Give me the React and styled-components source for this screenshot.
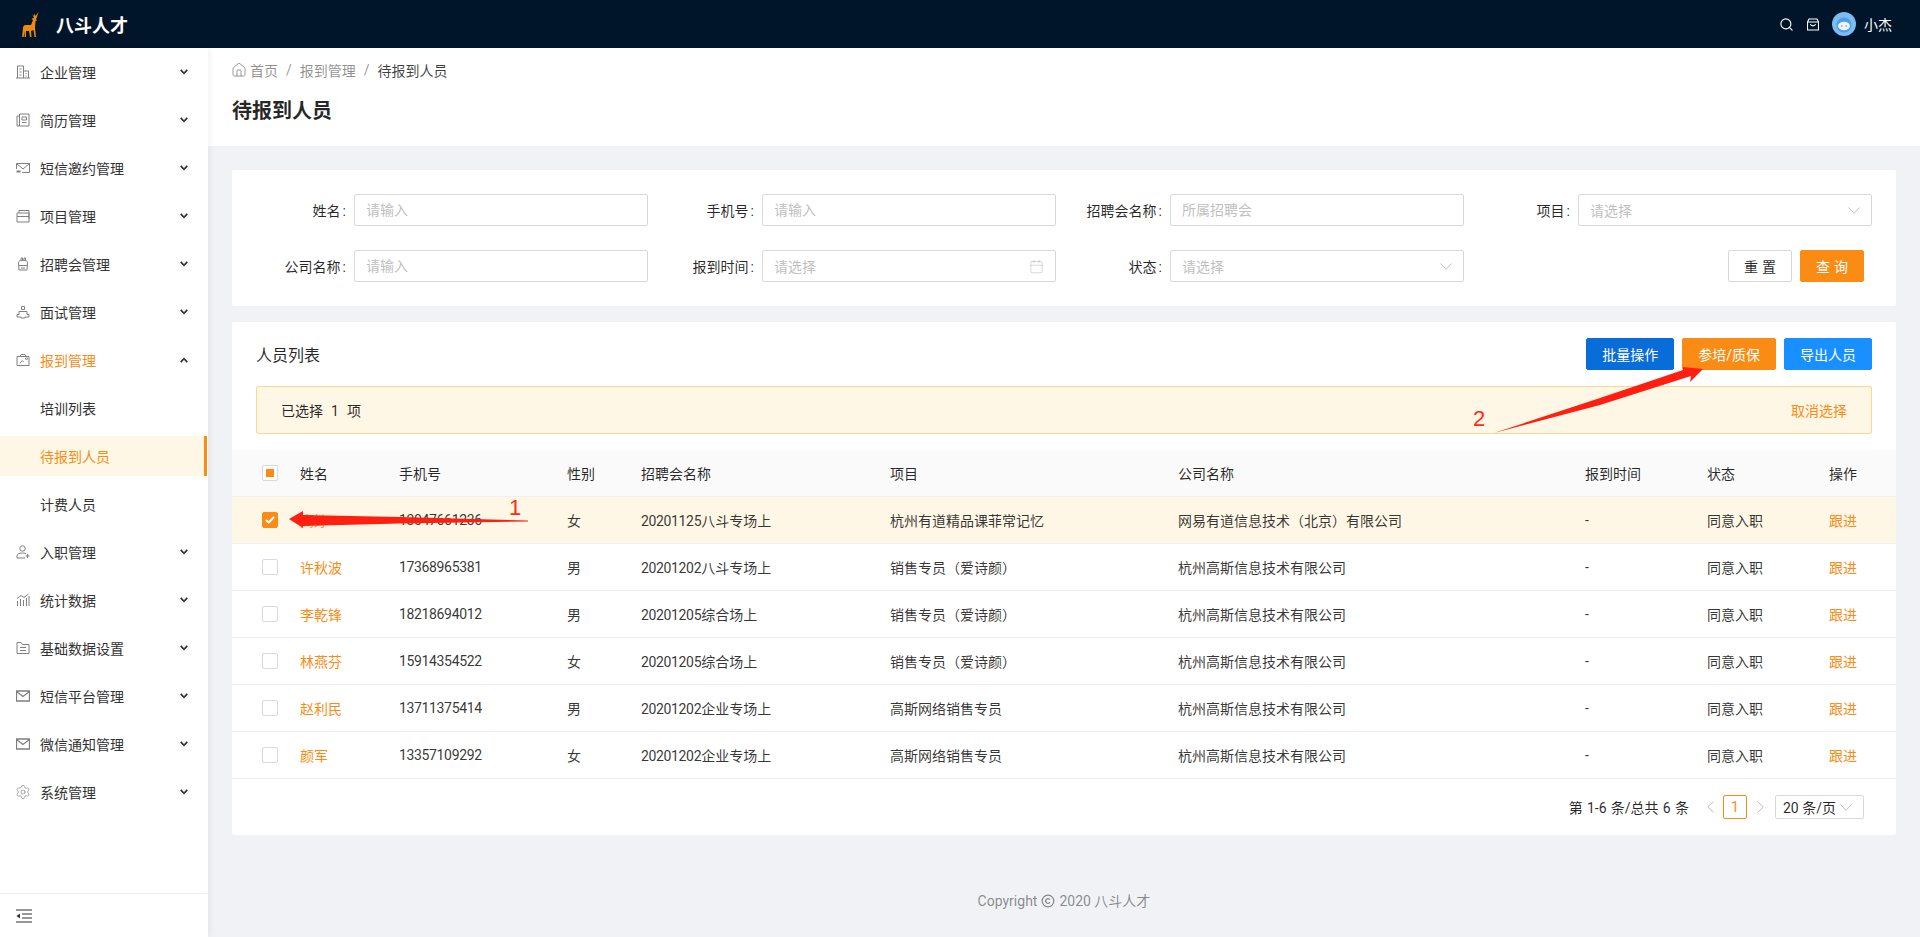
import React from 'react';
import styled, { createGlobalStyle } from 'styled-components';
import { Search, Home, Calendar, Copyright, Settings } from 'lucide-react';

const ORANGE = '#fa8c16';

const GlobalStyle = createGlobalStyle`
  html, body { margin: 0; padding: 0; height: 100%; }
  body {
    font-family: Roboto, "Noto Sans CJK SC", sans-serif;
    font-size: 14px;
    color: rgba(0, 0, 0, 0.85);
    background: #f0f2f5;
    overflow: hidden;
  }
  * { box-sizing: border-box; }
`;

const Page = styled.div`
  position: relative;
  display: flex;
  flex-direction: column;
  height: 100vh;
`;

const TopBar = styled.header`
  display: flex;
  align-items: center;
  flex: 0 0 48px;
  padding: 0 28px 0 21px;
  background: #001529;
  color: #fff;
`;

const Brand = styled.div`
  display: flex;
  align-items: center;
  gap: 17px;
  font-size: 18px;
  font-weight: 700;
  flex: 1;
`;

const TopIcon = styled.span`
  display: inline-flex;
  margin-right: 13px;
  color: #fff;
`;

const UserName = styled.span`
  margin-left: 8px;
`;

const Body = styled.div`
  display: flex;
  flex: 1;
  min-height: 0;
`;

const Sidebar = styled.aside`
  display: flex;
  flex-direction: column;
  flex: 0 0 208px;
  background: #fff;
  box-shadow: 2px 0 6px rgba(29, 35, 41, 0.05);
  z-index: 1;
`;

const Menu = styled.nav`
  display: flex;
  flex-direction: column;
  flex: 1;
`;

const MenuItem = styled.div`
  display: flex;
  align-items: center;
  flex: 0 0 40px;
  margin: 4px ${p => (p.$active ? '1px' : '0')} 4px 0;
  padding-left: ${p => (p.$sub ? 40 : 16)}px;
  padding-right: 20px;
  color: ${p => (p.$on ? ORANGE : '#333')};
  background: ${p => (p.$active ? '#fff7e6' : 'transparent')};
  border-right: ${p => (p.$active ? `3px solid ${ORANGE}` : '0')};
`;

const ItemIcon = styled.svg`
  flex: 0 0 14px;
  width: 14px;
  height: 14px;
  margin-right: 10px;
  fill: none;
  stroke: #808080;
  stroke-width: 1;
`;

const GearIcon = styled(Settings)`
  flex: 0 0 16px;
  margin: 0 9px 0 -1px;
  color: #808080;
`;

const ItemLabel = styled.span`
  flex: 1;
`;

const Chevron = styled.svg`
  width: 8px;
  height: 6px;
  fill: none;
  stroke: #333;
  stroke-width: 1.8;
  transform: ${p => (p.$up ? 'rotate(180deg)' : 'none')};
`;

const CollapseBar = styled.div`
  display: flex;
  align-items: center;
  flex: 0 0 44px;
  padding-left: 16px;
  border-top: 1px solid #f0f0f0;
  margin-right: 1px;
`;

const Main = styled.main`
  display: flex;
  flex-direction: column;
  flex: 1;
  min-width: 0;
`;

const PageHead = styled.div`
  height: 98px;
  padding: 11px 24px 0;
  background: #fff;
`;

const Crumbs = styled.div`
  display: flex;
  align-items: center;
  height: 22px;
  color: rgba(0, 0, 0, 0.45);
`;

const CrumbHome = styled.span`
  display: inline-flex;
  margin: 0 3px 0 -1px;
  color: #777;
`;

const CrumbSep = styled.span`
  margin: 0 8px;
`;

const CrumbNow = styled.span`
  color: rgba(0, 0, 0, 0.75);
`;

const PageTitle = styled.h1`
  margin: 14px 0 0;
  font-size: 20px;
  line-height: 32px;
  font-weight: 600;
`;

const Content = styled.div`
  padding: 24px 24px 0;
`;

const Card = styled.section`
  background: #fff;
  border-radius: 2px;
`;

const FilterCard = styled(Card)`
  display: grid;
  grid-template-columns: repeat(4, 408px);
  row-gap: 24px;
  padding: 24px 24px 24px 8px;
`;

const Field = styled.div`
  display: grid;
  grid-template-columns: 114px 294px;
  align-items: center;
`;

const FieldLabel = styled.label`
  text-align: right;
  color: rgba(0, 0, 0, 0.85);
`;

const Colon = styled.span`
  margin: 0 8px 0 2px;
`;

const TextInput = styled.input`
  height: 32px;
  padding: 0 11px;
  border: 1px solid #d9d9d9;
  border-radius: 2px;
  font: inherit;
  outline: none;
  &::placeholder { color: #bfbfbf; opacity: 1; }
`;

const PickBox = styled.div`
  display: flex;
  align-items: center;
  justify-content: space-between;
  height: 32px;
  padding: 0 11px;
  border: 1px solid #d9d9d9;
  border-radius: 2px;
  color: #bfbfbf;
`;

const ThinArrow = styled.svg`
  width: ${p => (p.$side ? 7 : 12)}px;
  height: ${p => (p.$side ? 12 : 7)}px;
  fill: none;
  stroke: #bfbfbf;
  stroke-width: 1;
`;

const FilterActions = styled.div`
  display: flex;
  justify-content: flex-end;
  gap: 8px;
  padding-right: 8px;
`;

const Button = styled.button`
  height: 32px;
  padding: 0 15px;
  border: 1px solid ${p => p.$bg || '#d9d9d9'};
  border-radius: 2px;
  background: ${p => p.$bg || '#fff'};
  color: ${p => (p.$bg ? '#fff' : 'rgba(0, 0, 0, 0.85)')};
  font: inherit;
  white-space: nowrap;
`;

const SpacedButton = styled(Button)`
  width: 64px;
  padding: 0;
  letter-spacing: 4px;
  text-indent: 4px;
`;

const ListCard = styled(Card)`
  margin-top: 16px;
`;

const ListBar = styled.div`
  display: flex;
  align-items: center;
  justify-content: space-between;
  padding: 16px 24px;
`;

const ListTitle = styled.div`
  font-size: 16px;
`;

const ListActions = styled.div`
  display: flex;
  gap: 8px;
`;

const Alert = styled.div`
  display: flex;
  align-items: center;
  justify-content: space-between;
  height: 48px;
  margin: 0 24px 16px;
  padding: 0 24px;
  border: 1px solid #ffd591;
  border-radius: 2px;
  background: #fff7e6;
`;

const Count = styled.span`
  margin: 0 8px;
`;

const Link = styled.span`
  color: ${ORANGE};
`;

const Table = styled.table`
  width: 100%;
  table-layout: fixed;
  border-collapse: separate;
  border-spacing: 0;
`;

const Col = styled.col`
  width: ${p => p.$w}px;
`;

const Th = styled.th`
  height: 47px;
  padding: 0 16px;
  background: #fafafa;
  border-bottom: 1px solid #f0f0f0;
  text-align: left;
  font-weight: 400;
`;

const Td = styled.td`
  height: 47px;
  padding: 0 16px;
  border-bottom: 1px solid #f0f0f0;
  background: ${p => (p.$on ? '#fff7e6' : '#fff')};
  color: rgba(0, 0, 0, 0.8);
  white-space: nowrap;
`;

const CheckCell = styled.div`
  padding-left: 14px;
`;

const Check = styled.span`
  display: flex;
  align-items: center;
  justify-content: center;
  width: 16px;
  height: 16px;
  border: 1px solid ${p => (p.$on ? ORANGE : '#d9d9d9')};
  border-radius: 2px;
  background: ${p => (p.$on ? ORANGE : '#fff')};
`;

const CheckDot = styled.span`
  width: 8px;
  height: 8px;
  background: ${ORANGE};
`;

const Digits = styled.span`
  letter-spacing: -0.35px;
`;

const Pager = styled.div`
  display: flex;
  align-items: center;
  justify-content: flex-end;
  gap: 1px;
  height: 56px;
  padding: 0 32px;
`;

const PagerTotal = styled.span`
  margin-right: 8px;
  word-spacing: 0.8px;
`;

const PagerStep = styled.span`
  display: flex;
  align-items: center;
  justify-content: center;
  width: 24px;
`;

const PagerNow = styled.span`
  display: flex;
  align-items: center;
  justify-content: center;
  width: 24px;
  height: 24px;
  border: 1px solid ${ORANGE};
  border-radius: 2px;
  color: ${ORANGE};
`;

const PagerSize = styled.div`
  display: flex;
  align-items: center;
  justify-content: space-between;
  width: 89px;
  height: 24px;
  margin-left: 2px;
  padding: 0 11px 0 7px;
  border: 1px solid #d9d9d9;
  border-radius: 2px;
`;

const Footer = styled.footer`
  display: flex;
  align-items: center;
  justify-content: center;
  gap: 4px;
  margin-top: auto;
  padding-bottom: 25px;
  line-height: 22px;
  color: rgba(0, 0, 0, 0.45);
`;

const Annotations = styled.svg`
  position: absolute;
  left: 0;
  top: 0;
  width: 1920px;
  height: 937px;
  pointer-events: none;
  z-index: 2;
`;

const Mark = styled.span`
  position: absolute;
  left: ${p => p.$x}px;
  top: ${p => p.$y}px;
  font-family: "Liberation Sans", sans-serif;
  font-size: 22px;
  line-height: 24px;
  color: #ff2a1a;
  z-index: 3;
`;

const Deer = () => (
  <svg width="18" height="25" viewBox="0 0 18 25">
    <path fill="#ee8a0c" d="M1 25 L2 16 Q2 13 5 13 L10 13 L12 8 L10.5 7 L13 5.5 L11 2 L13 4 L13.5 1.5 L14.5 4 L17.5 0 L16 5 L15 7 L16 8.5 L14.5 9 L14 16 L15 25 L13.5 25 L12.5 18 L10 19 L10.5 25 L9 25 L8 19 L5 19 L5 25 L3.5 25 L4 19 L2.5 25 Z" />
  </svg>
);

const Avatar = () => (
  <svg width="24" height="24" viewBox="0 0 24 24">
    <circle cx="12" cy="12" r="12" fill="#7cbcf3" />
    <circle cx="12" cy="13" r="7.5" fill="#4b9fec" />
    <ellipse cx="12" cy="14" rx="6" ry="4.2" fill="#eef5fd" />
    <circle cx="9.8" cy="14" r="0.8" fill="#5a8fc4" />
    <circle cx="14.2" cy="14" r="0.8" fill="#5a8fc4" />
  </svg>
);

const BagIcon = () => (
  <svg width="12" height="13" viewBox="0 0 12 13" fill="none" stroke="#fff" strokeWidth="1.1">
    <path d="M2 1h8l1.500 3v8h-11V4z" />
    <path d="M0.500 4h11M3.500 6c.5 2.500 4.500 2.500 5 0" />
  </svg>
);

const icons = {
  building: <><path d="M1.500 13V1h6v12M7.500 6h5v7M0 13h14M3.500 4h2M3.500 7h2M3.500 10h2M9.500 8.500h1M9.500 11h1" /></>,
  resume: <><path d="M3.500 1h9.500v12H3.500zM3.500 3H1v10h2.500M6 4h4.500v3H6zM6 9.500h4.500" /></>,
  invite: <><path d="M.5 2.500h13v9H6M.5 2.500L7 8l6.500-5.500M.5 2.500V8" /><path d="M.5 10.500h4" strokeWidth="2" /></>,
  project: <><path d="M1 4h12v9H1zM1 7.500h12M3 4V1.500h10V10" /></>,
  fair: <><path d="M3 13l-.5-7c0-2 1-2.500 4.500-2.500s4.500 .5 4.500 2.500L11 13zM3 8.500h8M5 3.500V1h1.500v2.500M8 3.500V1h1.500v2.500M5 11h4" /></>,
  interview: <><path d="M5.500 1.500h3v3h-3zM3 6.500h8v3h2v2.500h-4v1H5v-1H1V9.500h2z" /></>,
  report: <><path d="M1 3.500h12v9H1zM4 3.500L5 1.500h4l1 2M4 10.500c1-3 3-3 4-1.500M10.500 6.500a1 1 0 1 0-.01 0" /></>,
  onboard: <><circle cx="6.500" cy="3.500" r="2.700" /><path d="M1 13v-2c0-2 2-3 5.500-3 1.500 0 2.500.2 3.500.6M1 13h8M11.500 9v4M9.500 11h4" /></>,
  stats: <><path d="M1.500 13V8M4.500 13V6M7.500 13V7M10.500 13V5M13 13V3M1 5.500L5 2.500l3 2L12.500 1" /></>,
  base: <><path d="M1 3V12.500h12V3.500H6.500L5 1.500H1zM4 6.500h6M4 9.500h6" /></>,
  mail: <><path d="M.5 2h13v10H.5zM.5 2.500L7 7.500l6.500-5" strokeWidth="1.3" /></>,
};

const menu = [
  { icon: 'building', label: '企业管理' },
  { icon: 'resume', label: '简历管理' },
  { icon: 'invite', label: '短信邀约管理' },
  { icon: 'project', label: '项目管理' },
  { icon: 'fair', label: '招聘会管理' },
  { icon: 'interview', label: '面试管理' },
  { icon: 'report', label: '报到管理', open: true, children: ['培训列表', '待报到人员', '计费人员'] },
  { icon: 'onboard', label: '入职管理' },
  { icon: 'stats', label: '统计数据' },
  { icon: 'base', label: '基础数据设置' },
  { icon: 'mail', label: '短信平台管理' },
  { icon: 'mail', label: '微信通知管理' },
  { icon: 'gear', label: '系统管理' },
];

const columns = [52, 99, 168, 74, 249, 288, 407, 122, 122, 83];

const rows = [
  { name: '高婷', phone: '13047661236', sex: '女', code: '20201125', fair: '八斗专场上', project: '杭州有道精品课菲常记忆', company: '网易有道信息技术（北京）有限公司', on: true },
  { name: '许秋波', phone: '17368965381', sex: '男', code: '20201202', fair: '八斗专场上', project: '销售专员（爱诗颜）', company: '杭州高斯信息技术有限公司' },
  { name: '李乾锋', phone: '18218694012', sex: '男', code: '20201205', fair: '综合场上', project: '销售专员（爱诗颜）', company: '杭州高斯信息技术有限公司' },
  { name: '林燕芬', phone: '15914354522', sex: '女', code: '20201205', fair: '综合场上', project: '销售专员（爱诗颜）', company: '杭州高斯信息技术有限公司' },
  { name: '赵利民', phone: '13711375414', sex: '男', code: '20201202', fair: '企业专场上', project: '高斯网络销售专员', company: '杭州高斯信息技术有限公司' },
  { name: '颜军', phone: '13357109292', sex: '女', code: '20201202', fair: '企业专场上', project: '高斯网络销售专员', company: '杭州高斯信息技术有限公司' },
];

const Down = ({ up }) => (
  <Chevron $up={up} viewBox="0 0 8 6"><polyline points="0.7,0.9 4,4.300 7.300,0.900" /></Chevron>
);

const SelectArrow = () => (
  <ThinArrow viewBox="0 0 12 7"><polyline points="0.500,0.500 6,6.300 11.500,0.500" /></ThinArrow>
);

const Filter = ({ label, children }) => (
  <Field>
    <FieldLabel>{label}<Colon>:</Colon></FieldLabel>
    {children}
  </Field>
);

export default function App() {
  return (
    <Page>
      <GlobalStyle />
      <TopBar>
        <Brand><Deer />八斗人才</Brand>
        <TopIcon><Search size={15} strokeWidth={1.8} /></TopIcon>
        <TopIcon><BagIcon /></TopIcon>
        <Avatar />
        <UserName>小杰</UserName>
      </TopBar>
      <Body>
        <Sidebar>
          <Menu>
            {menu.map(m => (
              <React.Fragment key={m.label}>
                <MenuItem $on={m.open}>
                  {m.icon === 'gear'
                    ? <GearIcon size={16} strokeWidth={1} />
                    : <ItemIcon viewBox="0 0 14 14">{icons[m.icon]}</ItemIcon>}
                  <ItemLabel>{m.label}</ItemLabel>
                  <Down up={m.open} />
                </MenuItem>
                {m.children && m.children.map(c => (
                  <MenuItem key={c} $sub $active={c === '待报到人员'} $on={c === '待报到人员'}>
                    <ItemLabel>{c}</ItemLabel>
                  </MenuItem>
                ))}
              </React.Fragment>
            ))}
          </Menu>
          <CollapseBar>
            <svg width="16" height="14" viewBox="0 0 16 14" fill="none" stroke="#333" strokeWidth="1.2">
              <path d="M0 1h16M6 5h10M6 9h10M0 13h16" />
              <path d="M4 4.500v5L0.500 7z" fill="#333" stroke="none" />
            </svg>
          </CollapseBar>
        </Sidebar>
        <Main>
          <PageHead>
            <Crumbs>
              <CrumbHome><Home size={16} strokeWidth={1.1} /></CrumbHome>
              首页
              <CrumbSep>/</CrumbSep>
              报到管理
              <CrumbSep>/</CrumbSep>
              <CrumbNow>待报到人员</CrumbNow>
            </Crumbs>
            <PageTitle>待报到人员</PageTitle>
          </PageHead>
          <Content>
            <FilterCard>
              <Filter label="姓名"><TextInput placeholder="请输入" /></Filter>
              <Filter label="手机号"><TextInput placeholder="请输入" /></Filter>
              <Filter label="招聘会名称"><TextInput placeholder="所属招聘会" /></Filter>
              <Filter label="项目"><PickBox>请选择<SelectArrow /></PickBox></Filter>
              <Filter label="公司名称"><TextInput placeholder="请输入" /></Filter>
              <Filter label="报到时间"><PickBox>请选择<Calendar size={15} strokeWidth={1} /></PickBox></Filter>
              <Filter label="状态"><PickBox>请选择<SelectArrow /></PickBox></Filter>
              <FilterActions>
                <SpacedButton>重置</SpacedButton>
                <SpacedButton $bg={ORANGE}>查询</SpacedButton>
              </FilterActions>
            </FilterCard>
            <ListCard>
              <ListBar>
                <ListTitle>人员列表</ListTitle>
                <ListActions>
                  <Button $bg="#096dd9">批量操作</Button>
                  <Button $bg={ORANGE}>参培/质保</Button>
                  <Button $bg="#1890ff">导出人员</Button>
                </ListActions>
              </ListBar>
              <Alert>
                <span>已选择<Count>1</Count>项</span>
                <Link>取消选择</Link>
              </Alert>
              <Table>
                <colgroup>
                  {columns.map((w, i) => <Col key={i} $w={w} />)}
                </colgroup>
                <thead>
                  <tr>
                    <Th><CheckCell><Check><CheckDot /></Check></CheckCell></Th>
                    {['姓名', '手机号', '性别', '招聘会名称', '项目', '公司名称', '报到时间', '状态', '操作'].map(h => <Th key={h}>{h}</Th>)}
                  </tr>
                </thead>
                <tbody>
                  {rows.map(r => (
                    <tr key={r.phone}>
                      <Td $on={r.on}>
                        <CheckCell>
                          <Check $on={r.on}>
                            {r.on && (
                              <svg width="10" height="8" viewBox="0 0 10 8" fill="none" stroke="#fff" strokeWidth="2">
                                <polyline points="1,4 3.800,6.500 9,1" />
                              </svg>
                            )}
                          </Check>
                        </CheckCell>
                      </Td>
                      <Td $on={r.on}><Link>{r.name}</Link></Td>
                      <Td $on={r.on}><Digits>{r.phone}</Digits></Td>
                      <Td $on={r.on}>{r.sex}</Td>
                      <Td $on={r.on}><Digits>{r.code}</Digits>{r.fair}</Td>
                      <Td $on={r.on}>{r.project}</Td>
                      <Td $on={r.on}>{r.company}</Td>
                      <Td $on={r.on}>-</Td>
                      <Td $on={r.on}>同意入职</Td>
                      <Td $on={r.on}><Link>跟进</Link></Td>
                    </tr>
                  ))}
                </tbody>
              </Table>
              <Pager>
                <PagerTotal>第 1-6 条/总共 6 条</PagerTotal>
                <PagerStep><ThinArrow $side viewBox="0 0 7 12"><polyline points="6.500,0.500 0.700,6 6.500,11.500" /></ThinArrow></PagerStep>
                <PagerNow>1</PagerNow>
                <PagerStep><ThinArrow $side viewBox="0 0 7 12"><polyline points="0.500,0.500 6.300,6 0.500,11.500" /></ThinArrow></PagerStep>
                <PagerSize>20 条/页<SelectArrow /></PagerSize>
              </Pager>
            </ListCard>
          </Content>
          <Footer>Copyright <Copyright size={14} /> 2020 八斗人才</Footer>
        </Main>
      </Body>
      <Annotations viewBox="0 0 1920 937">
        <polygon fill="#ff1f10" points="289,519 303,511 303,515 400,517 528,520.500 528,521.500 400,523.500 303,526 303,528" />
        <polygon fill="#ff1f10" points="1494,433 1600,398 1683,370 1683,367 1703,369 1690,382 1691,376 1600,405" />
      </Annotations>
      <Mark $x={509} $y={496}>1</Mark>
      <Mark $x={1473} $y={407}>2</Mark>
    </Page>
  );
}
